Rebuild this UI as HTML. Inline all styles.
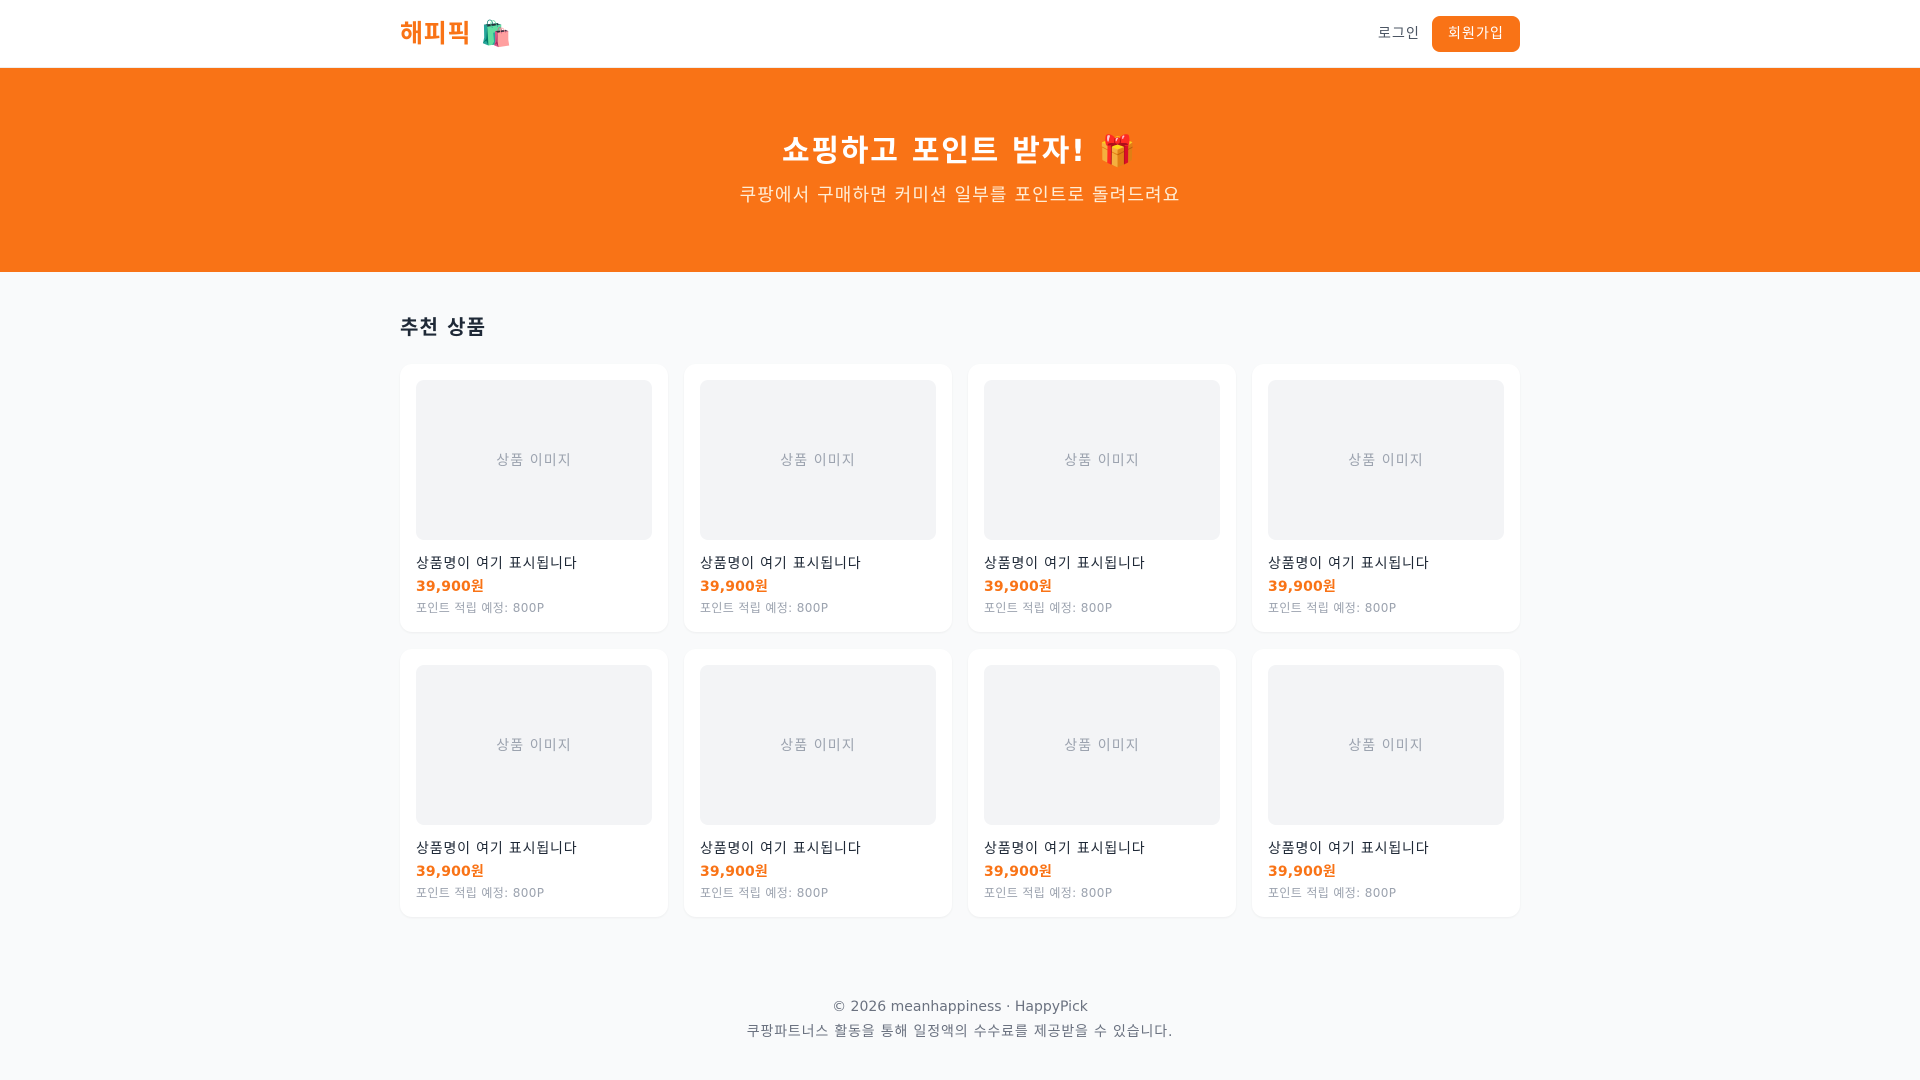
<!DOCTYPE html>
<html><head><meta charset="utf-8"><style>
*{box-sizing:border-box;margin:0;padding:0}
body{width:1920px;height:1080px;background:#f9fafb;font-family:"DejaVu Sans","Noto Sans CJK KR",sans-serif;color:#1f2937;overflow:hidden;letter-spacing:0.07em}
header{background:#fff;height:68px;border-bottom:1px solid #eee}
.wrap{width:1120px;margin:0 auto;position:relative}
.logo{position:absolute;left:0;top:16px;font-size:25px;font-weight:bold;color:#f97316;line-height:36px;letter-spacing:0.03em}
.nav{position:absolute;right:0;top:15px;display:flex;align-items:center;gap:12px}
.nav a{font-size:14px;color:#4b5563;line-height:38px}
.btn{background:#f97316;color:#fff!important;border-radius:8px;padding:0 16px;height:36px;line-height:37px!important;display:block}
.hero{background:#f97316;height:204px;text-align:center;color:#fff}
.hero h1{font-size:30px;font-weight:bold;padding-top:64px;line-height:40px;letter-spacing:0.06em}
.hero p{font-size:18px;margin-top:10px;line-height:28px;color:#ffedd5}
h2{font-size:20px;font-weight:bold;margin-top:41px;line-height:28px;height:28px}
.grid{display:grid;grid-template-columns:repeat(4,268px);gap:17px 16px;margin-top:23px}
.card{background:#fff;border-radius:12px;padding:16px;height:268px;box-shadow:0 1px 2px rgba(0,0,0,.05)}
.img{height:160px;background:#f3f4f6;border-radius:8px;display:flex;align-items:center;justify-content:center;color:#9ca3af;font-size:14px}
.nm{font-size:14px;margin-top:14px;line-height:20px;color:#1f2937;letter-spacing:0.06em}
.pr{font-size:14px;font-weight:bold;color:#f97316;margin-top:3px;line-height:20px;letter-spacing:0.01em}
.pt{font-size:12px;color:#9ca3af;margin-top:3px;line-height:16px;letter-spacing:0.03em}
footer{text-align:center;color:#6b7280;font-size:14px;position:absolute;top:997px;width:1920px;left:0}
footer p{line-height:20px}
footer p:first-child{letter-spacing:0}
footer p+p{margin-top:5px;font-size:14px;letter-spacing:0.06em}
</style></head><body>
<header><div class="wrap"><div class="logo">해피픽 🛍️</div><div class="nav"><a>로그인</a><a class="btn">회원가입</a></div></div></header>
<div class="hero"><h1>쇼핑하고 포인트 받자! 🎁</h1><p>쿠팡에서 구매하면 커미션 일부를 포인트로 돌려드려요</p></div>
<div class="wrap"><h2>추천 상품</h2>
<div class="grid">
<div class="card"><div class="img">상품 이미지</div><div class="nm">상품명이 여기 표시됩니다</div><div class="pr">39,900원</div><div class="pt">포인트 적립 예정: 800P</div></div>
<div class="card"><div class="img">상품 이미지</div><div class="nm">상품명이 여기 표시됩니다</div><div class="pr">39,900원</div><div class="pt">포인트 적립 예정: 800P</div></div>
<div class="card"><div class="img">상품 이미지</div><div class="nm">상품명이 여기 표시됩니다</div><div class="pr">39,900원</div><div class="pt">포인트 적립 예정: 800P</div></div>
<div class="card"><div class="img">상품 이미지</div><div class="nm">상품명이 여기 표시됩니다</div><div class="pr">39,900원</div><div class="pt">포인트 적립 예정: 800P</div></div>
<div class="card"><div class="img">상품 이미지</div><div class="nm">상품명이 여기 표시됩니다</div><div class="pr">39,900원</div><div class="pt">포인트 적립 예정: 800P</div></div>
<div class="card"><div class="img">상품 이미지</div><div class="nm">상품명이 여기 표시됩니다</div><div class="pr">39,900원</div><div class="pt">포인트 적립 예정: 800P</div></div>
<div class="card"><div class="img">상품 이미지</div><div class="nm">상품명이 여기 표시됩니다</div><div class="pr">39,900원</div><div class="pt">포인트 적립 예정: 800P</div></div>
<div class="card"><div class="img">상품 이미지</div><div class="nm">상품명이 여기 표시됩니다</div><div class="pr">39,900원</div><div class="pt">포인트 적립 예정: 800P</div></div>
</div></div>
<footer><p>© 2026 meanhappiness · HappyPick</p><p>쿠팡파트너스 활동을 통해 일정액의 수수료를 제공받을 수 있습니다.</p></footer>
</body></html>
